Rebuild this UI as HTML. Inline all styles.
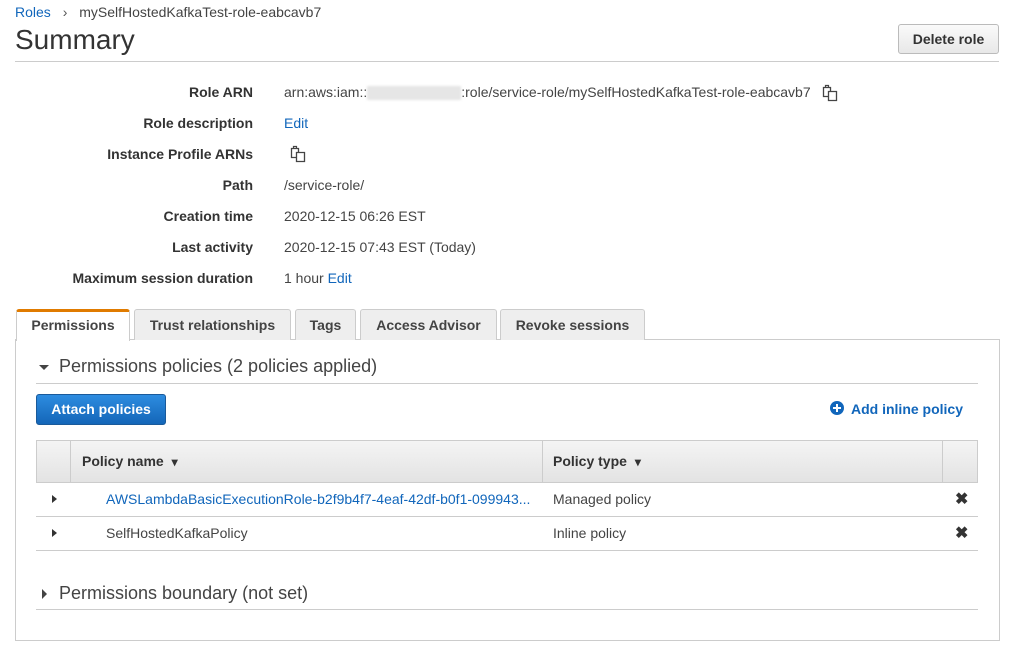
<!DOCTYPE html>
<html><head><meta charset="utf-8"><style>
*{margin:0;padding:0;box-sizing:border-box}
body{width:1012px;height:651px;background:#fff;font-family:"Liberation Sans",Arial,sans-serif;color:#444;position:relative;overflow:hidden;font-size:14px}
.a{position:absolute;white-space:nowrap}
.lbl{position:absolute;right:759px;font-weight:bold;color:#333;font-size:14px}
.val{position:absolute;left:284px;color:#444;font-size:14px}
a,.lnk{color:#1166bb;text-decoration:none}
.tab{position:absolute;top:309px;height:31px;border:1px solid #ccc;border-bottom:none;background:#eee;border-radius:3px 3px 0 0;font-weight:bold;font-size:14px;color:#444;text-align:center;line-height:30px}
.cp{display:inline-block;vertical-align:middle}
</style></head><body>
<div class="a" style="left:15px;top:4px;font-size:14px"><span class="lnk">Roles</span> <span style="color:#555;margin:0 8px">›</span> <span style="color:#444">mySelfHostedKafkaTest-role-eabcavb7</span></div>
<div class="a" style="left:15px;top:24px;font-size:28px;color:#333">Summary</div>
<div class="a" style="left:898px;top:24px;width:101px;height:30px;border:1px solid #bbb;border-radius:3px;background:linear-gradient(#fafafa,#e8e8e8);font-weight:bold;font-size:14px;color:#333;text-align:center;line-height:28px">Delete role</div>
<div class="a" style="left:15px;top:61px;width:984px;height:1px;background:#ccc"></div>

<div class="lbl" style="top:84px">Role ARN</div>
<div class="val" style="top:84px">arn:aws:iam::<span style="display:inline-block;width:94px;height:14px;background:#e6e6e6;vertical-align:middle;filter:blur(1px)"></span>:role/service-role/mySelfHostedKafkaTest-role-eabcavb7
<svg class="cp" width="18" height="18" viewBox="0 0 18 18" style="margin-left:6px"><path d="M2.5 3.5h7v9h-7z" fill="none" stroke="#444" stroke-width="1.3"/><path d="M7.5 7.5h8v9h-8z" fill="#fff" stroke="#444" stroke-width="1.3"/><path d="M4.5 3.5V1.5h3v2" fill="none" stroke="#444" stroke-width="1.2"/></svg></div>
<div class="lbl" style="top:115px">Role description</div>
<div class="val lnk" style="top:115px">Edit</div>
<div class="lbl" style="top:146px">Instance Profile ARNs</div>
<div class="val" style="top:145px;left:289px"><svg class="cp" width="18" height="18" viewBox="0 0 18 18"><path d="M2.5 3.5h7v9h-7z" fill="none" stroke="#444" stroke-width="1.3"/><path d="M7.5 7.5h8v9h-8z" fill="#fff" stroke="#444" stroke-width="1.3"/><path d="M4.5 3.5V1.5h3v2" fill="none" stroke="#444" stroke-width="1.2"/></svg></div>
<div class="lbl" style="top:177px">Path</div>
<div class="val" style="top:177px">/service-role/</div>
<div class="lbl" style="top:208px">Creation time</div>
<div class="val" style="top:208px">2020-12-15 06:26 EST</div>
<div class="lbl" style="top:239px">Last activity</div>
<div class="val" style="top:239px">2020-12-15 07:43 EST (Today)</div>
<div class="lbl" style="top:270px">Maximum session duration</div>
<div class="val" style="top:270px">1 hour <span class="lnk">Edit</span></div>

<div class="a" style="left:15px;top:339px;width:985px;height:302px;border:1px solid #ccc"></div>
<div class="tab" style="left:16px;width:114px;background:#fff;border-top:3px solid #e07b00;line-height:27px;height:32px">Permissions</div>
<div class="tab" style="left:134px;width:157px">Trust relationships</div>
<div class="tab" style="left:295px;width:61px">Tags</div>
<div class="tab" style="left:360px;width:137px">Access Advisor</div>
<div class="tab" style="left:500px;width:145px">Revoke sessions</div>

<div class="a" style="left:39px;top:365px;width:0;height:0;border-left:5px solid transparent;border-right:5px solid transparent;border-top:5px solid #444"></div>
<div class="a" style="left:59px;top:356px;font-size:18px;color:#444">Permissions policies (2 policies applied)</div>
<div class="a" style="left:36px;top:383px;width:942px;height:1px;background:#ccc"></div>
<div class="a" style="left:36px;top:394px;width:130px;height:31px;border:1px solid #1a5a9a;border-radius:3px;background:linear-gradient(#2d8ce0,#1466b8);color:#fff;font-weight:bold;font-size:14px;text-align:center;line-height:29px">Attach policies</div>
<div class="a" style="left:830px;top:401px;width:14px;height:14px;border-radius:50%;background:#1166bb"></div>
<div class="a" style="left:836px;top:404px;width:2px;height:8px;background:#fff"></div>
<div class="a" style="left:833px;top:407px;width:8px;height:2px;background:#fff"></div>
<div class="a lnk" style="left:851px;top:401px;font-weight:bold;font-size:14px">Add inline policy</div>

<div class="a" style="left:36px;top:440px;width:942px;height:43px;border:1px solid #ccc;background:linear-gradient(#f4f4f4,#e3e3e3)"></div>
<div class="a" style="left:70px;top:441px;width:1px;height:41px;background:#ccc"></div>
<div class="a" style="left:542px;top:441px;width:1px;height:41px;background:#ccc"></div>
<div class="a" style="left:942px;top:441px;width:1px;height:41px;background:#ccc"></div>
<div class="a" style="left:82px;top:453px;font-weight:bold;color:#333">Policy name <span style="font-size:12px;margin-left:4px">▾</span></div>
<div class="a" style="left:553px;top:453px;font-weight:bold;color:#333">Policy type <span style="font-size:12px;margin-left:4px">▾</span></div>

<div class="a" style="left:36px;top:516px;width:942px;height:1px;background:#ccc"></div>
<div class="a" style="left:36px;top:550px;width:942px;height:1px;background:#ccc"></div>
<div class="a" style="left:52px;top:495px;width:0;height:0;border-top:4px solid transparent;border-bottom:4px solid transparent;border-left:5px solid #333"></div>
<div class="a" style="left:52px;top:529px;width:0;height:0;border-top:4px solid transparent;border-bottom:4px solid transparent;border-left:5px solid #333"></div>
<div class="a lnk" style="left:106px;top:491px">AWSLambdaBasicExecutionRole-b2f9b4f7-4eaf-42df-b0f1-099943...</div>
<div class="a" style="left:553px;top:491px">Managed policy</div>
<div class="a" style="left:955px;top:489px;font-size:16px;font-weight:bold;color:#333">✖</div>
<div class="a" style="left:106px;top:525px">SelfHostedKafkaPolicy</div>
<div class="a" style="left:553px;top:525px">Inline policy</div>
<div class="a" style="left:955px;top:523px;font-size:16px;font-weight:bold;color:#333">✖</div>

<div class="a" style="left:42px;top:589px;width:0;height:0;border-top:5px solid transparent;border-bottom:5px solid transparent;border-left:5px solid #444"></div>
<div class="a" style="left:59px;top:583px;font-size:18px;color:#444">Permissions boundary (not set)</div>
<div class="a" style="left:36px;top:609px;width:942px;height:1px;background:#ccc"></div>
</body></html>
